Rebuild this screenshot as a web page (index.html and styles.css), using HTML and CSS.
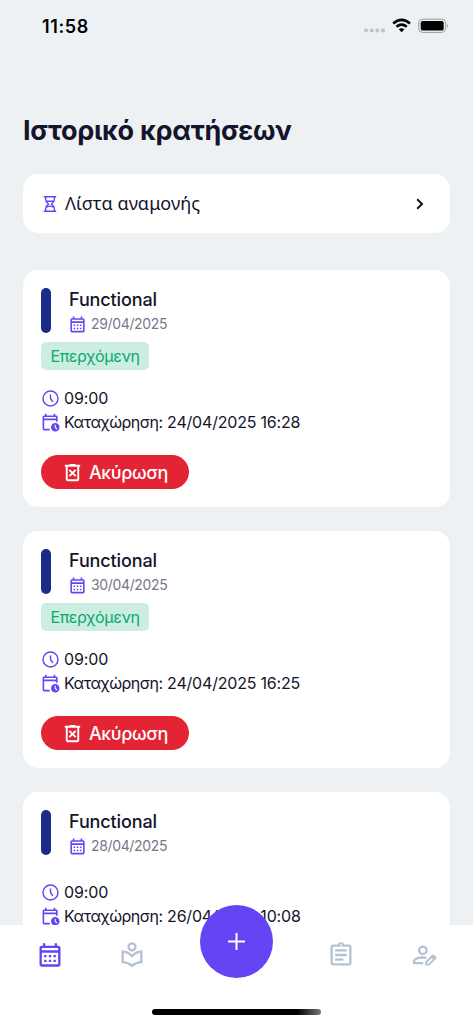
FILE: index.html
```html
<!DOCTYPE html>
<html lang="el">
<head>
<meta charset="utf-8">
<title>Ιστορικό κρατήσεων</title>
<link rel="stylesheet" href="styles.css">
</head>
<body>
<svg class="defs" aria-hidden="true">
  <symbol id="calendar" viewBox="0 0 24 24"><path fill-rule="evenodd" d="M5 22q-.825 0-1.412-.587T3 20V6q0-.825.588-1.412T5 4h1V2h2v2h8V2h2v2h1q.825 0 1.413.588T21 6v14q0 .825-.587 1.413T19 22zm0-2h14V10H5zM5 8h14V6H5z"/><path d="M7 12h2v2H7zm4 0h2v2h-2zm4 0h2v2h-2zm-8 4h2v2H7zm4 0h2v2h-2zm4 0h2v2h-2z"/></symbol>
  <symbol id="clock" viewBox="0 0 24 24"><path fill="none" stroke="currentColor" stroke-width="1.8" d="M12 2.500a9.500 9.500 0 1 0 0 19a9.500 9.500 0 1 0 0-19M12 7v5l3 4.200"/></symbol>
  <symbol id="calendar-clock" viewBox="0 0 24 24"><path fill-rule="evenodd" d="M4 22q-.825 0-1.412-.587T2 20V5q0-.825.588-1.412T4 3h1V1h2v2h9V1h2v2h1q.825 0 1.413.588T21 5v6h-2V9H4v11h7v2zM4 7h15V5H4z"/><path fill-rule="evenodd" d="M18 12.500a5.400 5.400 0 1 0 0 10.800a5.400 5.400 0 1 0 0-10.800zm-.7 2.200v3.600l2.500 2.500.9-.9-2.100-2.100v-3.100z"/></symbol>
  <symbol id="trash" viewBox="0 0 24 24"><path d="m9.4 16.5 2.6-2.6 2.6 2.6 1.4-1.4-2.6-2.6L16 9.9l-1.4-1.4-2.6 2.6-2.6-2.6L8 9.9l2.6 2.6L8 15.1zM7 21q-.825 0-1.412-.587T5 19V6H4V4h5V3h6v1h5v2h-1v13q0 .825-.587 1.413T17 21zM17 6H7v13h10z"/></symbol>
</svg>
<div class="screen">
  <header class="status">
    <span class="time">11:58</span>
    <svg class="signals" viewBox="0 0 86 20">
      <g fill="#bfc3c5"><circle cx="3" cy="12.5" r="2"/><circle cx="8.7" cy="12.5" r="2"/><circle cx="14.3" cy="12.5" r="2"/><circle cx="20" cy="12.5" r="2"/></g>
      <g fill="none" stroke="#000" stroke-width="2.5"><path d="M30.200 5.500Q38.600-1.700 47 5.500M33.400 8.800Q38.600 4.500 43.800 8.800"/></g>
      <path d="M35.800 11.300Q38.600 9 41.400 11.300L38.600 14.200z"/>
      <rect x="55.700" y="1.200" width="27" height="13.200" rx="4" fill="none" stroke="#9a9d9e"/>
      <rect x="57.700" y="3" width="23" height="9.600" rx="2.200"/>
      <path d="M84.200 5.800q1.600 2 0 4.200z" fill="#888"/>
    </svg>
  </header>
  <main class="content">
    <h1 class="title">Ιστορικό κρατήσεων</h1>
    <a class="waitlist">
      <svg class="hourglass" viewBox="0 0 14 18"><path fill="none" stroke="currentColor" stroke-width="1.4" d="M.8 1.800h12.400M.8 16.200h12.400M2.600 1.800v2.700q0 2.300 2.900 4.500Q2.600 11.200 2.600 13.500v2.700M11.400 1.800v2.700q0 2.300-2.900 4.500 2.900 2.200 2.900 4.500v2.700M3.300 6.200h7.400M3.800 12.300q3.200-2.400 6.400 0"/></svg>
      <span class="waitlist-text">Λίστα αναμονής</span>
      <svg class="chevron" viewBox="0 0 8 12"><path fill="none" stroke="currentColor" stroke-width="2" d="M1.200 1.200 6 6 1.200 10.800"/></svg>
    </a>
    <article class="card">
      <div class="head"><i class="stripe"></i><div><h2 class="name">Functional</h2><p class="date"><svg><use href="#calendar"/></svg><span>29/04/2025</span></p></div></div>
      <div class="badge-row"><span class="badge">Επερχόμενη</span></div>
      <p class="info"><svg><use href="#clock"/></svg><span class="hour">09:00</span></p>
      <p class="info"><svg><use href="#calendar-clock"/></svg><span><span class="label">Καταχώρηση:</span> <span class="stamp">24/04/2025 16:28</span></span></p>
      <button class="cancel"><svg><use href="#trash"/></svg><span>Ακύρωση</span></button>
    </article>
    <article class="card">
      <div class="head"><i class="stripe"></i><div><h2 class="name">Functional</h2><p class="date"><svg><use href="#calendar"/></svg><span>30/04/2025</span></p></div></div>
      <div class="badge-row"><span class="badge">Επερχόμενη</span></div>
      <p class="info"><svg><use href="#clock"/></svg><span class="hour">09:00</span></p>
      <p class="info"><svg><use href="#calendar-clock"/></svg><span><span class="label">Καταχώρηση:</span> <span class="stamp">24/04/2025 16:25</span></span></p>
      <button class="cancel"><svg><use href="#trash"/></svg><span>Ακύρωση</span></button>
    </article>
    <article class="card last">
      <div class="head"><i class="stripe"></i><div><h2 class="name">Functional</h2><p class="date"><svg><use href="#calendar"/></svg><span>28/04/2025</span></p></div></div>
      <p class="info"><svg><use href="#clock"/></svg><span class="hour">09:00</span></p>
      <p class="info"><svg><use href="#calendar-clock"/></svg><span><span class="label">Καταχώρηση:</span> <span class="stamp">26/04/2025 10:08</span></span></p>
    </article>
  </main>
  <nav class="nav">
    <div class="tabs">
      <svg class="active"><use href="#calendar"/></svg>
      <svg viewBox="0 0 24 24"><path fill-rule="evenodd" d="M12 1a4 4 0 1 0 0 8a4 4 0 1 0 0-8zm0 2a2 2 0 1 1 0 4a2 2 0 1 1 0-4zM12 11.550C9.640 9.350 6.480 8 3 8v11c3.480 0 6.640 1.350 9 3.550 2.360-2.190 5.520-3.550 9-3.550V8c-3.480 0-6.640 1.350-9 3.550zm7 5.580c-2.530.34-4.930 1.300-7 2.820-2.060-1.520-4.470-2.490-7-2.830v-6.950c2.100.38 4.050 1.350 5.640 2.830L12 14.280l1.360-1.270c1.590-1.480 3.540-2.450 5.640-2.830z"/></svg>
      <svg class="clip" viewBox="0 0 24 24"><path fill-rule="evenodd" d="M5 21q-.825 0-1.412-.587T3 19V5q0-.825.588-1.412T5 3h4.200q.325-.9 1.088-1.450T12 1t1.713.55T14.800 3H19q.825 0 1.413.588T21 5v14q0 .825-.587 1.413T19 21zm0-2h14V5H5zM12 2.800a.8.8 0 1 0 0 1.600a.8.8 0 1 0 0-1.600z"/><path d="M7 7h10v2H7zm0 4h10v2H7zm0 4h7v2H7z"/></svg>
      <svg class="person" viewBox="0 0 24 24"><g fill="none" stroke="currentColor" stroke-width="2"><circle cx="11" cy="8" r="3.200"/><path d="M11.300 19H3.500v-1.600q0-1.300 1.200-2Q8.800 13.500 14 14.500"/></g><path fill-rule="evenodd" d="M13 21v-3.300l5.700-5.700q1.100-1 2.200-.1l1.400 1.400q.9 1.100-.1 2.200L16.500 21zm1.500-1.400h1.200l3.800-3.800-1.100-1.100-3.900 3.900z"/></svg>
    </div>
    <button class="fab"><svg viewBox="0 0 17 17"><path stroke="#fff" stroke-width="2" d="M8.500 0v17M0 8.500h17"/></svg></button>
    <i class="home"></i>
  </nav>
</div>
</body>
</html>
```
FILE: styles.css
```css
* { box-sizing: border-box; }
body { margin: 0; font-family: Inter, "Noto Sans", sans-serif; color: #14142b; }
h1, h2, p { margin: 0; font-weight: 400; }
svg { display: block; flex: none; fill: currentColor; }
button { border: 0; font: inherit; padding: 0; }
span { white-space: nowrap; }
.defs { display: none; }
.screen { position: relative; height: 1024px; overflow: hidden; background: #edf1f3; }
.status { height: 54px; padding: 17px 24px 0 42px; display: flex; justify-content: space-between; align-items: flex-start; color: #000; }
.time { font-size: 18px; line-height: 20px; font-weight: 600; letter-spacing: 0.6px; }
.signals { width: 86px; height: 20px; margin-top: 1px; }
.content { padding: 0 23px; display: flex; flex-direction: column; }
.title { margin-top: 58px; height: 62px; font-size: 27px; line-height: 38px; font-weight: 700; letter-spacing: -0.28px; white-space: nowrap; }
.waitlist { height: 59px; padding: 0 26px 0 20px; border-radius: 15px; background: #fff; display: flex; align-items: center; }
.hourglass { width: 14px; height: 18px; color: #6544f3; }
.waitlist-text { margin-left: 8px; padding-bottom: 2px; flex: 1; font-family: "Noto Sans", sans-serif; font-size: 18px; letter-spacing: 0.08px; }
.chevron { width: 8px; height: 12px; }
.card { margin-top: 24px; height: 237px; padding: 18px; border-radius: 15px; background: #fff; }
.waitlist + .card { margin-top: 37px; }
.head { display: flex; gap: 18px; height: 45px; }
.stripe { width: 10px; height: 45px; border-radius: 5px; background: #192c88; }
.name { height: 24px; font-size: 18px; line-height: 23px; font-weight: 500; letter-spacing: -0.12px; }
.date { display: flex; align-items: center; gap: 4px; height: 23px; color: #77778a; font-size: 14px; letter-spacing: -0.35px; }
.date svg { width: 19px; height: 19px; margin-left: -1px; margin-top: 1px; color: #6544f3; }
.badge-row { height: 37px; padding-top: 9px; display: flex; }
.badge { height: 28px; width: 108px; border-radius: 5px; text-align: center; background: #cbeee1; color: #0ba971; font-size: 16px; line-height: 28px; letter-spacing: -0.35px; }
.info { display: flex; align-items: center; gap: 4px; height: 24px; font-size: 16px; }
.info svg { width: 19px; height: 19px; color: #6544f3; }
.hour { letter-spacing: -0.1px; }
.label { letter-spacing: -0.5px; }
.stamp { letter-spacing: -0.2px; }
.badge-row + .info { margin-top: 16px; }
.last .head + .info { margin-top: 25px; }
.cancel { margin-top: 21px; width: 148px; height: 34px; border-radius: 17px; background: #e32434; color: #fff; display: flex; align-items: center; padding-left: 20px; gap: 5px; font-size: 18px; font-weight: 500; letter-spacing: -0.4px; }
.cancel svg { width: 23px; height: 23px; }
.nav { position: absolute; left: 0; right: 0; bottom: 0; height: 99px; background: #fff; }
.tabs { display: flex; padding: 16px 35px 0 36px; color: #b4c2d3; }
.tabs svg { width: 28px; height: 28px; margin-right: 54px; }
.tabs .active { color: #6544f3; }
.tabs .clip { margin-left: 127px; margin-right: 55px; }
.tabs .person { margin-right: 0; }
.fab { position: absolute; left: 200px; top: -20px; width: 73px; height: 73px; border-radius: 50%; background: #6544f3; display: grid; place-items: center; }
.fab svg { width: 17px; height: 17px; }
.home { position: absolute; left: 152px; bottom: 9px; width: 169px; height: 6px; border-radius: 3px; background: linear-gradient(90deg, #000 86%, #777); }
```
